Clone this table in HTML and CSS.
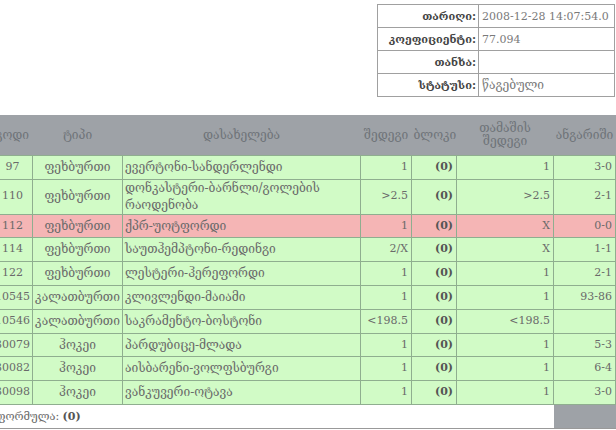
FILE: index.html
```html
<!DOCTYPE html>
<html lang="ka">
<head>
<meta charset="utf-8">
<title>ბილეთი</title>
<link rel="stylesheet" href="styles.css">
</head>
<body>
<div class="page">
  <table class="info">
    <tr><td class="lbl">თარიღი:</td><td class="val n">2008-12-28 14:07:54.0</td></tr>
    <tr><td class="lbl">კოეფიციენტი:</td><td class="val n">77.094</td></tr>
    <tr><td class="lbl">თანხა:</td><td class="val"></td></tr>
    <tr><td class="lbl">სტატუსი:</td><td class="val">წაგებული</td></tr>
  </table>

  <table class="bets">
    <colgroup>
      <col class="c-code"><col class="c-type"><col class="c-name"><col class="c-res"><col class="c-blk"><col class="c-game"><col class="c-score">
    </colgroup>
    <thead>
      <tr>
        <th>კოდი</th><th>ტიპი</th><th>დასახელება</th><th>შედეგი</th><th>ბლოკი</th><th>თამაშის შედეგი</th><th>ანგარიში</th>
      </tr>
    </thead>
    <tbody>
      <tr><td class="ctr n">97</td><td class="ctr">ფეხბურთი</td><td>ევერტონი-სანდერლენდი</td><td class="num n">1</td><td class="num n b">(0)</td><td class="num n">1</td><td class="num n">3-0</td></tr>
      <tr><td class="ctr n">110</td><td class="ctr">ფეხბურთი</td><td>დონკასტერი-ბარნლი/გოლების რაოდენობა</td><td class="num n">&gt;2.5</td><td class="num n b">(0)</td><td class="num n">&gt;2.5</td><td class="num n">2-1</td></tr>
      <tr class="lost"><td class="ctr n">112</td><td class="ctr">ფეხბურთი</td><td>ქპრ-უოტფორდი</td><td class="num n">1</td><td class="num n b">(0)</td><td class="num n">X</td><td class="num n">0-0</td></tr>
      <tr><td class="ctr n">114</td><td class="ctr">ფეხბურთი</td><td>საუთჰემპტონი-რედინგი</td><td class="num n">2/X</td><td class="num n b">(0)</td><td class="num n">X</td><td class="num n">1-1</td></tr>
      <tr><td class="ctr n">122</td><td class="ctr">ფეხბურთი</td><td>ლესტერი-ჰერეფორდი</td><td class="num n">1</td><td class="num n b">(0)</td><td class="num n">1</td><td class="num n">2-1</td></tr>
      <tr><td class="ctr n">10545</td><td class="ctr">კალათბურთი</td><td>კლივლენდი-მაიამი</td><td class="num n">1</td><td class="num n b">(0)</td><td class="num n">1</td><td class="num n">93-86</td></tr>
      <tr><td class="ctr n">10546</td><td class="ctr">კალათბურთი</td><td>საკრამენტო-ბოსტონი</td><td class="num n">&lt;198.5</td><td class="num n b">(0)</td><td class="num n">&lt;198.5</td><td class="num n"></td></tr>
      <tr><td class="ctr n">30079</td><td class="ctr">ჰოკეი</td><td>პარდუბიცე-მლადა</td><td class="num n">1</td><td class="num n b">(0)</td><td class="num n">1</td><td class="num n">5-3</td></tr>
      <tr><td class="ctr n">30082</td><td class="ctr">ჰოკეი</td><td>აისბარენი-ვოლფსბურგი</td><td class="num n">1</td><td class="num n b">(0)</td><td class="num n">1</td><td class="num n">6-4</td></tr>
      <tr><td class="ctr n">30098</td><td class="ctr">ჰოკეი</td><td>ვანკუვერი-ოტავა</td><td class="num n">1</td><td class="num n b">(0)</td><td class="num n">1</td><td class="num n">3-0</td></tr>
    </tbody>
    <tfoot>
      <tr><td class="formula" colspan="6">ფორმულა: <b>(0)</b></td><td class="corner"></td></tr>
    </tfoot>
  </table>
</div>
</body>
</html>
```

FILE: styles.css
```css
html, body {
  margin: 0;
  padding: 0;
  background: #ffffff;
}
body {
  font-family: "DejaVu Serif", serif;
  font-size: 12px;
  color: #6a6a6a;
  overflow: hidden;
}
.n { font-size: 11px; }
.page {
  width: 623px;
  margin-left: -8px;
  padding-top: 4px;
  display: flex;
  flex-direction: column;
}
.info {
  align-self: flex-end;
  width: 238px;
  border-collapse: collapse;
  table-layout: fixed;
}
.info td {
  border: 1px solid #a0a0a0;
  height: 22px;
  padding: 0 2px 0 3px;
  line-height: 13px;
  white-space: nowrap;
}
.info .lbl {
  width: 97px;
  text-align: right;
  font-weight: bold;
  font-size: 11px;
  color: #444;
  padding: 0 2px 0 1px;
}
.info .val {
  color: #7a7a7a;
}
.bets {
  margin-top: 18px;
  width: 623px;
  border-collapse: collapse;
  table-layout: fixed;
}
.c-code { width: 40px; }
.c-type { width: 90px; }
.c-name { width: 238px; }
.c-res { width: 51px; }
.c-blk { width: 45px; }
.c-game { width: 97px; }
.c-score { width: 62px; }
.bets th {
  background: #9ea2a7;
  color: #6f7479;
  font-weight: normal;
  text-align: center;
  line-height: 13px;
  height: 40px;
  padding: 0 2px;
  border: none;
}
.bets td {
  background: #d1fbc6;
  border: 1px solid #8fae8f;
  height: 22.8px;
  padding: 0 3px 0 2px;
  line-height: 16.9px;
  white-space: nowrap;
}
.bets td.ctr { text-align: center; padding-left: 1px; padding-right: 1px; }
.bets td.num { text-align: right; }
.bets td.b { font-weight: bold; color: #555; }
.bets tr.lost td { background: #f5b5b5; }
.bets td:nth-child(3) { white-space: normal; }
.bets tfoot td {
  border: none;
  border-top: 1px solid #8fae8f;
  border-bottom: 1px solid #999;
  height: 23px;
  padding: 0;
  line-height: 13px;
  font-size: 11px;
}
.bets tfoot td.formula {
  background: #fff;
  text-align: left;
  padding-left: 0;
  text-indent: 4px;
}
.bets tfoot td.formula b { color: #555; }
.bets tfoot td.corner {
  background: #9ea2a7;
}
```
